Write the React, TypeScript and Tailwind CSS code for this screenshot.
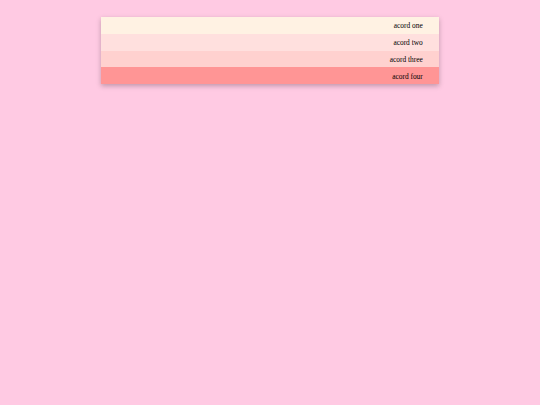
const rows = [
  { label: "acord one", bg: "bg-[#fff2e3]" },
  { label: "acord two", bg: "bg-[#ffe0de]" },
  { label: "acord three", bg: "bg-[#ffd1cf]" },
  { label: "acord four", bg: "bg-[#ff9595]" },
];

export default function App() {
  return (
    <div className="min-h-[405px] w-full bg-[#ffcae3] pt-[17px]">
      <div className="mx-auto w-[62.5%] shadow-[0_2px_5px_rgba(0,0,0,0.25)]">
        {rows.map((row) => (
          <div
            key={row.label}
            className={`flex h-[16.75px] items-center justify-end pt-px pr-[16px] ${row.bg}`}
          >
            <span className="font-['Liberation_Serif',serif] text-[7.4px] text-black">
              {row.label}
            </span>
          </div>
        ))}
      </div>
    </div>
  );
}
